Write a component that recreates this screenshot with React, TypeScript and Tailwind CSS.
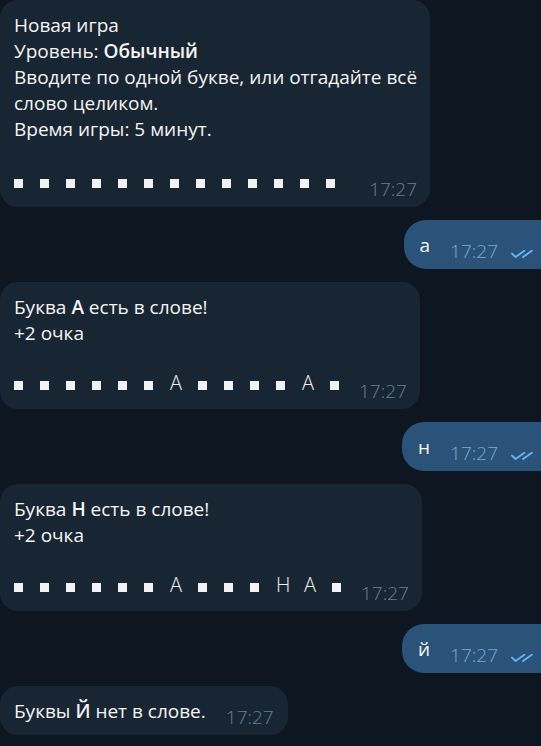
import React from 'react'

type Item = string

const SQ = '■'

const row1: Item[] = Array(13).fill(SQ)
const row2: Item[] = [SQ, SQ, SQ, SQ, SQ, SQ, 'А', SQ, SQ, SQ, SQ, 'А', SQ]
const row3: Item[] = [SQ, SQ, SQ, SQ, SQ, SQ, 'А', SQ, SQ, SQ, 'Н', 'А', SQ]

function WordRow({ items }: { items: Item[] }) {
  return (
    <div className="h-[20px] whitespace-nowrap text-[20px] font-light leading-[20px] text-[#f2f2f2]">
      {items.map((it, i) =>
        it === SQ ? (
          <span key={i} className="mr-[17px] inline-block h-[9px] w-[9px] bg-[#f2f2f2] last:mr-0" />
        ) : (
          <span key={i} className="mr-[16px] inline-block w-[12px] text-center last:mr-0">
            {it}
          </span>
        )
      )}
    </div>
  )
}

function Time({ out = false }: { out?: boolean }) {
  return (
    <span
      className={
        out
          ? 'ml-[20px] mt-[10px] shrink-0 text-[19px] font-light leading-[19px] text-[#7ba7d4]'
          : 'ml-[20px] mt-[10px] shrink-0 text-[19px] font-light leading-[19px] text-[#6d7f8f]'
      }
    >
      17:27
    </span>
  )
}

function Checks() {
  return (
    <svg width="25" height="8" viewBox="0 0 25 8" fill="none" className="ml-[13px] mt-[18px] shrink-0">
      <path d="M1 3.6 L4.6 7 L13.4 0.8" stroke="#64b5f6" strokeWidth="1.9" strokeLinecap="round" strokeLinejoin="round" />
      <path d="M12 7 L20.8 0.8" stroke="#64b5f6" strokeWidth="1.9" strokeLinecap="round" />
    </svg>
  )
}

// входящее сообщение с полем слова
function GameMsg({ children, items, tall = false }: { children: React.ReactNode; items: Item[]; tall?: boolean }) {
  return (
    <div className="flex">
      <div className="rounded-[18px] bg-[#182533] pb-[8px] pl-[14px] pr-[13px] pt-[12px]">
        <div className="whitespace-nowrap text-[19px] leading-[26px] text-[#f5f5f5]">{children}</div>
        <div className={tall ? 'mt-[29px] flex items-start justify-between' : 'mt-[27px] flex items-start justify-between'}>
          <WordRow items={items} />
          <span className="ml-[20px] mt-[9px] shrink-0 text-[19px] font-light leading-[19px] text-[#6d7f8f]">17:27</span>
        </div>
      </div>
    </div>
  )
}

function OutMsg({ text }: { text: string }) {
  return (
    <div className="flex justify-end">
      <div className="flex items-start rounded-l-[22px] bg-[#2b5278] pb-[8px] pl-[16px] pr-[5px] pt-[12px]">
        <span className="text-[19px] leading-[26px] text-[#f5f5f5]">{text}</span>
        <Time out />
        <Checks />
      </div>
    </div>
  )
}

export default function App() {
  return (
    <div className="min-h-screen w-full overflow-hidden bg-[#0e1621] font-['Open_Sans',sans-serif]">
      <div className="flex flex-col gap-[13px]">
        <GameMsg items={row1} tall>
          Новая игра
          <br />
          Уровень: <span className="font-semibold">Обычный</span>
          <br />
          Вводите по одной букве, или отгадайте всё
          <br />
          слово целиком.
          <br />
          Время игры: 5 минут.
        </GameMsg>

        <OutMsg text="а" />

        <GameMsg items={row2}>
          Буква <span className="font-semibold">А</span> есть в слове!
          <br />
          +2 очка
        </GameMsg>

        <OutMsg text="н" />

        <GameMsg items={row3}>
          Буква <span className="font-semibold">Н</span> есть в слове!
          <br />
          +2 очка
        </GameMsg>

        <OutMsg text="й" />

        <div className="flex">
          <div className="flex items-start rounded-[18px] bg-[#182533] pb-[8px] pl-[14px] pr-[14px] pt-[12px]">
            <span className="whitespace-nowrap text-[19px] leading-[26px] text-[#f5f5f5]">
              Буквы <span className="font-semibold">Й</span> нет в слове.
            </span>
            <Time />
          </div>
        </div>
      </div>
    </div>
  )
}
